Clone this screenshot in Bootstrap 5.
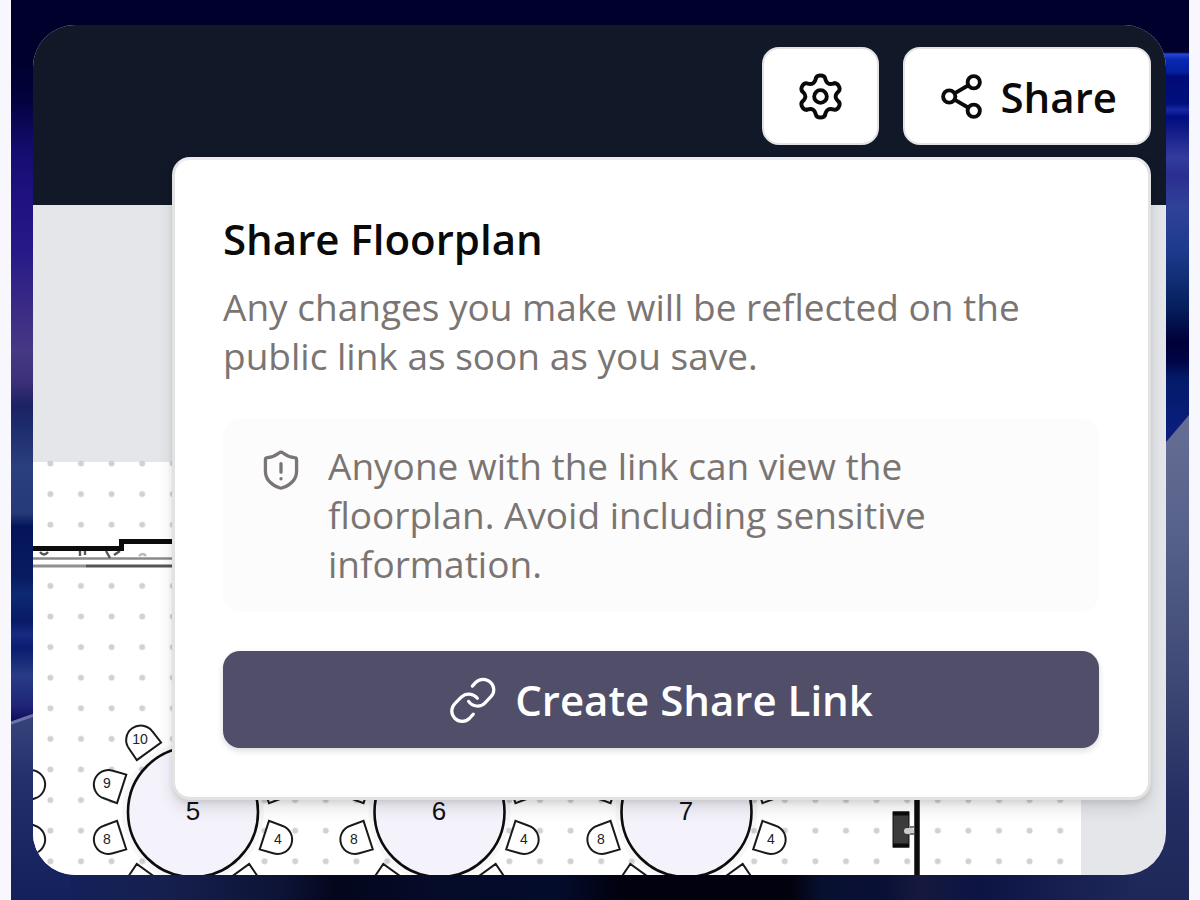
<!DOCTYPE html>
<html lang="en">
<head>
<meta charset="utf-8">
<meta name="viewport" content="width=device-width, initial-scale=1">
<title>Share Floorplan</title>
<link href="https://cdn.jsdelivr.net/npm/bootstrap@5.3.0/dist/css/bootstrap.min.css" rel="stylesheet">
<style>
  body { background: #f7f7fd; font-family: "Open Sans", "Noto Sans", sans-serif; color: #0a0a0a; }
  .stage { min-height: 100vh; margin: 0 11px; padding: 25px 23px 25px 22px; background: #00002c; }
  .app-window { border-radius: 42px; background: #e5e6ea; }
  .app-header { height: 180px; padding: 22px 15px; gap: 24px; background: #111827; z-index: 2; }
  .tool-btn { height: 98px; padding: 0 32px; gap: 15px; border: 2px solid #e3e3e6; border-radius: 17px; background: #fff; color: #0a0a0a; font-size: 42px; font-weight: 600; line-height: 49px; }
  .tool-btn:hover, .tool-btn:focus { background: #f6f6f8; border-color: #e3e3e6; color: #0a0a0a; }
  .share-panel { top: 132px; right: 15px; width: 979px; max-width: calc(100% - 30px); padding: 54px 49px 49px 48px; border: 3px solid #e2e2e2; border-top-color: #ededef; border-radius: 18px; background: #fff; box-shadow: 0 9px 16px rgba(0,0,0,.11), 0 3px 5px rgba(0,0,0,.08); }
  .panel-title { margin-bottom: 19px; font-size: 42px; font-weight: 600; line-height: 49px; }
  .panel-text { margin-bottom: 39px; font-size: 37px; line-height: 49px; color: #7a7572; }
  .notice { margin-bottom: 39px; padding: 22px 41px 24px 36px; gap: 25px; border-radius: 17px; background: #fcfcfc; font-size: 37px; line-height: 49px; color: #7a7572; }
  .notice svg { margin-top: 7px; }
  .create-btn { height: 97px; gap: 18px; border: 0; border-radius: 17px; background: #504e69; color: #fff; font-size: 42px; font-weight: 600; line-height: 49px; box-shadow: 0 3px 6px rgba(0,0,0,.14); }
  .create-btn:hover, .create-btn:focus { background: #47455f; color: #fff; }
  .plan { font-family: "Liberation Sans", Arial, sans-serif; }
</style>
</head>
<body>
<main class="stage position-relative d-flex flex-column">
  <svg class="position-absolute top-0 start-0 w-100 h-100" viewBox="0 0 1178 900" preserveAspectRatio="none" aria-hidden="true">
    <defs>
      <linearGradient id="wl" x1="0" y1="0" x2="0" y2="1">
        <stop offset="0" stop-color="#00002c"/><stop offset=".07" stop-color="#00002e"/><stop offset=".11" stop-color="#02023e"/><stop offset=".17" stop-color="#140d70"/><stop offset=".22" stop-color="#1f1280"/><stop offset=".28" stop-color="#271a88"/><stop offset=".34" stop-color="#3a2a85"/><stop offset=".39" stop-color="#463884"/><stop offset=".425" stop-color="#3a3078"/><stop offset=".45" stop-color="#1c2264"/><stop offset=".47" stop-color="#1c2a6c"/><stop offset=".52" stop-color="#2a3f7e"/><stop offset=".57" stop-color="#263a78"/><stop offset=".585" stop-color="#04145a"/><stop offset=".64" stop-color="#081a60"/><stop offset=".66" stop-color="#0c2a70"/><stop offset=".69" stop-color="#081a66"/><stop offset=".705" stop-color="#182a80"/><stop offset=".72" stop-color="#0a1c70"/><stop offset=".75" stop-color="#283c84"/><stop offset=".785" stop-color="#1e2478"/><stop offset=".8" stop-color="#120c58"/>
      </linearGradient>
      <linearGradient id="wr" x1="0" y1="0" x2="0" y2="1">
        <stop offset="0" stop-color="#00002c"/><stop offset=".058" stop-color="#000030"/><stop offset=".06" stop-color="#2348d8"/><stop offset=".066" stop-color="#0a28b0"/><stop offset=".08" stop-color="#0420a0"/><stop offset=".085" stop-color="#000a78"/><stop offset=".115" stop-color="#00107c"/><stop offset=".122" stop-color="#1428a4"/><stop offset=".13" stop-color="#000c80"/><stop offset=".175" stop-color="#333c9c"/><stop offset=".195" stop-color="#2a2e90"/><stop offset=".23" stop-color="#304298"/><stop offset=".28" stop-color="#1c3a8c"/><stop offset=".34" stop-color="#06205e"/><stop offset=".38" stop-color="#00003a"/><stop offset=".4" stop-color="#000444"/><stop offset=".42" stop-color="#041a68"/><stop offset=".48" stop-color="#0a1e7c"/>
      </linearGradient>
      <linearGradient id="wb" x1="0" y1="0" x2="1" y2="0">
        <stop offset="0" stop-color="#14205a"/><stop offset=".09" stop-color="#16204e"/><stop offset=".2" stop-color="#0c1335"/><stop offset=".25" stop-color="#03061c"/><stop offset=".34" stop-color="#050b28"/><stop offset=".46" stop-color="#040c2c"/><stop offset=".52" stop-color="#01010f"/><stop offset=".68" stop-color="#02020f"/><stop offset=".71" stop-color="#081030"/><stop offset=".77" stop-color="#0a1036"/><stop offset=".8" stop-color="#16193e"/><stop offset=".86" stop-color="#0c1444"/><stop offset="1" stop-color="#1e2858"/>
      </linearGradient>
      <linearGradient id="wlg" x1="0" y1="0" x2="0" y2="1"><stop offset="0" stop-color="#3c4a80"/><stop offset=".4" stop-color="#24306c"/><stop offset="1" stop-color="#14205a"/></linearGradient>
      <linearGradient id="wrg" x1="0" y1="0" x2="0" y2="1"><stop offset="0" stop-color="#666e94"/><stop offset=".25" stop-color="#56618a"/><stop offset=".55" stop-color="#3e4874"/><stop offset=".8" stop-color="#252e62"/><stop offset="1" stop-color="#1e2858"/></linearGradient>
    </defs>
    <rect width="80" height="900" fill="url(#wl)"/>
    <rect x="1098" width="80" height="900" fill="url(#wr)"/>
    <path d="M0 723L80 695V900H0Z" fill="url(#wlg)"/>
    <path d="M0 723L80 695" stroke="#6a74a8" stroke-width="3"/>
    <path d="M1098 478L1156 441L1178 415V900H1098Z" fill="url(#wrg)"/>
    <rect x="60" y="860" width="1058" height="40" fill="url(#wb)"/>
  </svg>

  <div class="app-window position-relative flex-grow-1 d-flex flex-column overflow-hidden">
    <header class="app-header position-relative d-flex justify-content-end align-items-start">
      <button type="button" class="btn tool-btn d-flex align-items-center" aria-label="Settings">
        <svg width="49" height="49" viewBox="-24 -24 48 48" fill="none" stroke="currentColor" stroke-width="3.8" stroke-linecap="round" aria-hidden="true">
          <defs><path id="cog" d="M-4.5-18C-3.5-21.5 3.5-21.5 4.5-18C5.6-12.7 8.2-11.2 13.34-12.9"/></defs>
          <use href="#cog"/><use href="#cog" transform="rotate(60)"/><use href="#cog" transform="rotate(120)"/><use href="#cog" transform="rotate(180)"/><use href="#cog" transform="rotate(240)"/><use href="#cog" transform="rotate(300)"/>
          <circle r="6.2"/>
        </svg>
      </button>
      <button type="button" class="btn tool-btn d-flex align-items-center" aria-expanded="true">
        <svg width="49" height="49" viewBox="0 0 24 24" fill="none" stroke="currentColor" stroke-width="1.9" aria-hidden="true"><circle cx="18" cy="5" r="3"/><circle cx="6" cy="12" r="3"/><circle cx="18" cy="19" r="3"/><path d="M8.6 13.5L15.4 17.5M15.4 6.5L8.6 10.5"/></svg>
        Share
      </button>
    </header>

    <div class="position-relative flex-grow-1">
      <svg class="plan position-absolute top-0 start-0 w-100 h-100" viewBox="33 205 1133 670" preserveAspectRatio="xMinYMin slice" role="img" aria-label="Floorplan">
        <defs>
          <pattern id="dots" x="35.1" y="448.2" width="30.6" height="30.6" patternUnits="userSpaceOnUse"><circle cx="15.3" cy="15.3" r="3" fill="#d0d1d5"/></pattern>
          <path id="seat" d="M-15-75H15L14.500-89A14.500 14.500 0 0 0-14.500-89Z" fill="#fff" stroke="#1a1a1a" stroke-width="2"/>
          <g id="round-table">
            <circle r="71" fill="#000" fill-opacity=".03"/>
            <circle r="65" fill="#f4f3fb" stroke="#0c0c0c" stroke-width="2.6"/>
            <use href="#seat"/><use href="#seat" transform="rotate(36)"/><use href="#seat" transform="rotate(72)"/><use href="#seat" transform="rotate(108)"/><use href="#seat" transform="rotate(144)"/><use href="#seat" transform="rotate(180)"/><use href="#seat" transform="rotate(216)"/><use href="#seat" transform="rotate(252)"/><use href="#seat" transform="rotate(288)"/><use href="#seat" transform="rotate(324)"/>
          </g>
        </defs>
        <rect x="33" y="462" width="1048" height="500" fill="#fff"/>
        <rect x="33" y="458" width="1048" height="500" fill="url(#dots)"/>
        <rect x="33" y="551" width="140" height="16" fill="#fff"/>
        <path d="M33 558.5H173" stroke="#8a8a8a" stroke-width="2.6"/>
        <path d="M33 566H86" stroke="#909090" stroke-width="3"/>
        <path d="M86 566H173" stroke="#555" stroke-width="3"/>
        <path d="M40 552Q44 557 48 552M80 551V556M85 551V555M106 551L110 558M114 555L120 551" fill="none" stroke="#555" stroke-width="2.4"/>
        <path d="M139 556Q143 552 146 556" fill="none" stroke="#bbb" stroke-width="2.4"/>
        <path d="M33 548.5H121.5V541.5H173" fill="none" stroke="#0c0c0c" stroke-width="5"/>
        <use href="#round-table" x="-54" y="812"/>
        <use href="#round-table" x="193" y="812"/>
        <use href="#round-table" x="439.5" y="812"/>
        <use href="#round-table" x="686.5" y="812"/>
        <g fill="#111" text-anchor="middle" font-size="26">
          <text x="193" y="820">5</text><text x="439" y="820">6</text><text x="686" y="820">7</text>
        </g>
        <g fill="#222" text-anchor="middle" font-size="14">
          <text x="140" y="744">10</text><text x="107" y="788">9</text><text x="107" y="844">8</text><text x="278" y="844">4</text>
          <text x="354" y="844">8</text><text x="524" y="844">4</text><text x="601" y="844">8</text><text x="771" y="844">4</text>
        </g>
        <rect x="893" y="812" width="16" height="35" fill="#3c3c3c" stroke="#111" stroke-width="1"/>
        <path d="M893 813.5H909M893 845.5H909" stroke="#0c0c0c" stroke-width="4"/>
        <path d="M917 780V875" stroke="#0c0c0c" stroke-width="5.5"/>
        <path d="M907 831H911" stroke="#ccc" stroke-width="6" stroke-linecap="round"/><path d="M910 827H914M910 834H914" stroke="#777" stroke-width="2"/>
      </svg>
    </div>

    <section class="share-panel position-absolute z-3" role="dialog" aria-labelledby="share-title">
      <h1 class="panel-title" id="share-title">Share Floorplan</h1>
      <p class="panel-text">Any changes you make will be reflected on the public link as soon as you save.</p>
      <div class="notice d-flex align-items-start">
        <svg class="flex-shrink-0" width="44" height="44" viewBox="0 0 24 24" fill="none" stroke="currentColor" stroke-width="1.8" stroke-linecap="round" stroke-linejoin="round" aria-hidden="true"><path d="M20.500 12.500c0 5-3.700 7.700-7.700 9.200a2.300 2.300 0 0 1-1.600 0C7.200 20.200 3.500 17.500 3.500 12.500V6.500a1.200 1.200 0 0 1 1.100-1.200C7 5 8.900 4.200 10.900 2.700a1.700 1.700 0 0 1 2.200 0C15.100 4.200 17 5 19.400 5.300a1.200 1.200 0 0 1 1.100 1.200Z"/><path d="M12 8.500v4.700M12 16.700v.1"/></svg>
        <span>Anyone with the link can view the floorplan. Avoid including sensitive information.</span>
      </div>
      <button type="button" class="btn create-btn w-100 d-flex align-items-center justify-content-center">
        <svg width="48" height="48" viewBox="79 107 142 142" fill="none" stroke="currentColor" stroke-width="9.5" stroke-linecap="round" stroke-linejoin="round" aria-hidden="true"><path d="M148 137L158 126C170 114 190 114 202 126C214 138 215 156 203 168L185 187C172 200 149 199 137 182"/><path d="M163 173C150 158 130 156 116 169L97 188C84 201 84 219 96 232C108 244 128 244 140 232L151 220"/></svg>
        Create Share Link
      </button>
    </section>
  </div>
</main>
<script src="https://cdn.jsdelivr.net/npm/bootstrap@5.3.0/dist/js/bootstrap.bundle.min.js"></script>
</body>
</html>
